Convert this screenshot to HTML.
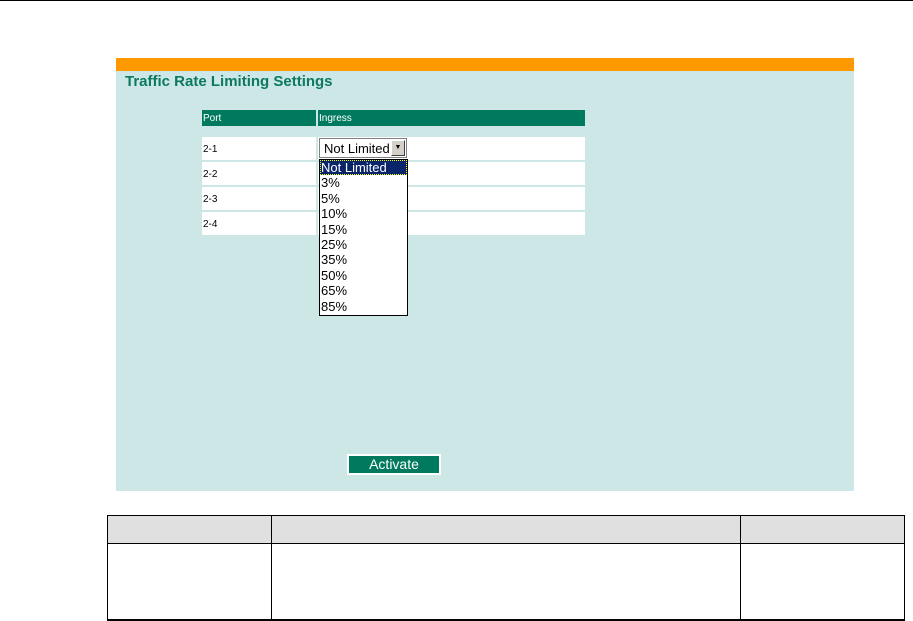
<!DOCTYPE html>
<html><head><style>
body{margin:0;width:913px;height:621px;background:#fff;position:relative;overflow:hidden;font-family:"Liberation Sans",Arial,sans-serif}
div{position:absolute;box-sizing:border-box}
.c{font-size:10px;color:#000;line-height:25px;padding-left:1px}
.w{background:#fff}
.it{left:0;width:87px;height:15.4px;font-size:13px;line-height:16px;padding-left:1px}
</style></head><body>
<div style="left:0;top:0;width:913px;height:1px;background:#000"></div>
<div style="left:116px;top:58px;width:738px;height:433px;background:#cde6e6"></div>
<div style="left:116px;top:58px;width:738px;height:13px;background:#f90"></div>
<div style="left:125px;top:73px;font-size:15px;font-weight:bold;color:#0b7a5e">Traffic Rate Limiting Settings</div>
<div style="left:202px;top:110px;width:114px;height:16px;background:#007a5e;color:#fff;font-size:10px;line-height:18px;padding-left:1px">Port</div>
<div style="left:318px;top:110px;width:267px;height:16px;background:#007a5e;color:#fff;font-size:10px;line-height:18px;padding-left:1px">Ingress</div>
<div class="w c" style="left:202px;top:137px;width:114px;height:23px">2-1</div>
<div class="w" style="left:318px;top:137px;width:267px;height:23px"></div>
<div class="w c" style="left:202px;top:162px;width:114px;height:23px">2-2</div>
<div class="w" style="left:318px;top:162px;width:267px;height:23px"></div>
<div class="w c" style="left:202px;top:187px;width:114px;height:23px">2-3</div>
<div class="w" style="left:318px;top:187px;width:267px;height:23px"></div>
<div class="w c" style="left:202px;top:212px;width:114px;height:23px">2-4</div>
<div class="w" style="left:318px;top:212px;width:267px;height:23px"></div>
<div style="left:319px;top:138px;width:88px;height:20px;border:1px solid #808080;background:#fff;font-size:13px;line-height:19px;padding-left:4px">Not Limited</div>
<div style="left:391px;top:140px;width:14px;height:16px;background:#d4d0c8;border:1px solid;border-color:#fff #404040 #404040 #fff;font-size:7px;text-align:center;line-height:14px">▼</div>
<div style="left:319px;top:159px;width:89px;height:157px;border:1px solid #000;background:#fff">
<div class="it" style="top:0;background:#0a246a;color:#fff;outline:1px dotted #ff0;outline-offset:-1px">Not Limited</div>
<div class="it" style="top:15.4px">3%</div>
<div class="it" style="top:30.8px">5%</div>
<div class="it" style="top:46.2px">10%</div>
<div class="it" style="top:61.6px">15%</div>
<div class="it" style="top:77px">25%</div>
<div class="it" style="top:92.4px">35%</div>
<div class="it" style="top:107.8px">50%</div>
<div class="it" style="top:123.2px">65%</div>
<div class="it" style="top:138.6px">85%</div>
</div>
<div style="left:347px;top:454px;width:94px;height:21px;background:#007a5e;border:2px solid #fff;color:#fff;font-size:14px;text-align:center;line-height:17px">Activate</div>
<div style="left:107px;top:515px;width:798px;height:106px;border:1px solid #000;border-bottom:2px solid #000"></div>
<div style="left:108px;top:516px;width:796px;height:28px;background:#e0e0e0;border-bottom:1px solid #000"></div>
<div style="left:271px;top:515px;width:1px;height:106px;background:#000"></div>
<div style="left:740px;top:515px;width:1px;height:106px;background:#000"></div>
</body></html>
